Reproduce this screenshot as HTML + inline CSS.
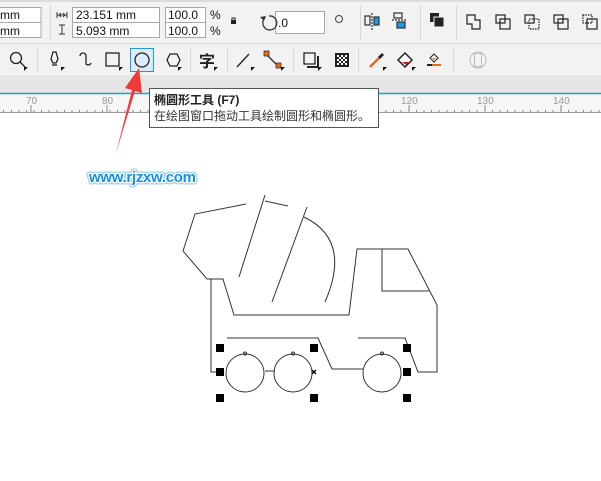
<!DOCTYPE html>
<html><head><meta charset="utf-8"><style>
html,body{margin:0;padding:0;width:601px;height:481px;overflow:hidden;background:#fff;font-family:"Liberation Sans","Noto Sans CJK SC",sans-serif}
svg{position:absolute;left:0;top:0}
</style></head><body>
<svg width="601" height="481" viewBox="0 0 601 481" xmlns="http://www.w3.org/2000/svg" font-family="Liberation Sans, Noto Sans CJK SC, sans-serif">
<rect x="0" y="0" width="601" height="43" fill="#f2f2f2"/>
<rect x="0" y="0" width="601" height="2" fill="#dcdcdc"/>
<line x1="0" y1="43.5" x2="601" y2="43.5" stroke="#dadada"/>
<g fill="#fff" stroke="#a8a8a8">
<rect x="-2" y="7.5" width="43" height="15"/><rect x="-2" y="22.5" width="43" height="15"/>
<rect x="72.5" y="7.5" width="87" height="15"/><rect x="72.5" y="22.5" width="87" height="15"/>
<rect x="165.5" y="7.5" width="40" height="15"/><rect x="165.5" y="22.5" width="40" height="15"/>
<rect x="275.5" y="11.5" width="49" height="22"/>
</g>
<g font-size="12" fill="#111">
<text x="0" y="19">mm</text><text x="0" y="35">mm</text>
<text x="76" y="19">23.151 mm</text><text x="76" y="35">5.093 mm</text>
<text x="168" y="19">100.0</text><text x="168" y="35">100.0</text>
<text x="210" y="19">%</text><text x="210" y="35">%</text>
<text x="278" y="27">.0</text>
</g>
<line x1="50.5" y1="5" x2="50.5" y2="40" stroke="#d8d8d8"/>
<g stroke="#333" fill="none">
<path d="M57 15h10M57 12v6M67 12v6M59 15l2-2M59 15l2 2M65 15l-2-2M65 15l-2 2"/>
<path d="M62 25v9M59 25h6M59 34h6"/>
</g>
<rect x="231" y="20" width="5" height="4" fill="#222"/><path d="M232 20v-2h3v2" stroke="#222" fill="none"/>
<path d="M269 16a7 7 0 1 1-5.5 4" stroke="#333" stroke-width="1.3" fill="none"/><path d="M260 17l4 4 2-5z" fill="#333"/>
<circle cx="339" cy="19" r="3.5" stroke="#444" fill="none"/>
<g stroke="#d8d8d8"><line x1="360.5" y1="5" x2="360.5" y2="40"/><line x1="420.5" y1="5" x2="420.5" y2="40"/><line x1="456.5" y1="5" x2="456.5" y2="40"/></g>
<g stroke="#333" fill="none" stroke-width="1.2">
<path d="M365 16h5v9h-5z"/><path d="M372 13v17" stroke-dasharray="2 1"/>
<rect x="374" y="17" width="5" height="8" fill="#1a9de0"/>
<path d="M394 13h8v5h-8z"/><path d="M392 20h14" stroke-dasharray="2 1"/>
<rect x="397" y="22" width="8" height="6" fill="#1a9de0"/>
</g>
<rect x="430" y="13" width="9" height="9" fill="#222"/><rect x="434" y="17" width="10" height="10" fill="#222" stroke="#f2f2f2"/>
<g stroke="#222" fill="none" stroke-width="1.2">
<path d="M467 15h8v5h5v9h-8v-5h-5z"/>
<rect x="496" y="15" width="9" height="8"/><rect x="500" y="19" width="10" height="10"/>
<rect x="525" y="15" width="9" height="8"/><rect x="529" y="19" width="10" height="10" stroke-dasharray="1.5 1"/>
<rect x="554" y="15" width="9" height="8"/><rect x="558" y="19" width="10" height="10"/>
<rect x="583" y="15" width="9" height="8" stroke-dasharray="1.5 1"/><rect x="587" y="19" width="10" height="10"/>
</g>
<rect x="0" y="44" width="601" height="31" fill="#f2f2f2"/>
<g stroke="#d8d8d8"><line x1="37.5" y1="48" x2="37.5" y2="72"/><line x1="190.5" y1="48" x2="190.5" y2="72"/><line x1="227.5" y1="48" x2="227.5" y2="72"/><line x1="293.5" y1="48" x2="293.5" y2="72"/><line x1="358.5" y1="48" x2="358.5" y2="72"/><line x1="453.5" y1="48" x2="453.5" y2="72"/></g>
<g fill="#111">
<path d="M24 67l4 0-4 4z"/><path d="M61 67l4 0-4 4z"/><path d="M119 67l4 0-4 4z"/><path d="M149 67l4 0-4 4z"/><path d="M178 67l4 0-4 4z"/><path d="M214 67l4 0-4 4z"/><path d="M251 67l4 0-4 4z"/><path d="M281 67l4 0-4 4z"/><path d="M318 67l4 0-4 4z"/><path d="M383 67l4 0-4 4z"/><path d="M412 67l4 0-4 4z"/>
</g>
<g stroke="#222" fill="none" stroke-width="1.3">
<circle cx="16" cy="58" r="5.5"/><path d="M20 62l5 5"/>
<path d="M53 52l3 0 2 7-2 4h-3l-2-4z"/><path d="M52 65h5"/>
<path d="M80 56a3 3 0 0 1 6 0v8a3 3 0 0 0 5-1"/>
<rect x="106" y="53" width="13" height="13"/>
<path d="M167 60l3-6h7l3 6-3 6h-7z"/>
<path d="M237 67l12-13"/>
<path d="M266 54l12 12" stroke="#333"/>
<path d="M304 53h11v11h-11z"/><path d="M307 67h11v-11" stroke-width="2"/>
</g>
<rect x="130.5" y="48.5" width="23" height="23" fill="#dcecfb" stroke="#1e9ae0"/>
<circle cx="142" cy="60" r="7" stroke="#222" stroke-width="1.3" fill="none"/>
<text x="199" y="67" font-size="16" font-weight="bold" fill="#222">字</text>
<rect x="264" y="51" width="5" height="5" fill="#ee6a12" stroke="#222" stroke-width=".7"/><rect x="276" y="63" width="5" height="5" fill="#ee6a12" stroke="#222" stroke-width=".7"/>
<rect x="335" y="53" width="14" height="14" fill="#222"/>
<g fill="#fff"><rect x="337" y="55" width="2" height="2"/><rect x="341" y="55" width="2" height="2"/><rect x="345" y="55" width="2" height="2"/><rect x="339" y="57" width="2" height="2"/><rect x="343" y="57" width="2" height="2"/><rect x="337" y="59" width="2" height="2"/><rect x="341" y="59" width="2" height="2"/><rect x="345" y="59" width="2" height="2"/><rect x="339" y="61" width="2" height="2"/><rect x="343" y="61" width="2" height="2"/><rect x="337" y="63" width="2" height="2"/><rect x="341" y="63" width="2" height="2"/><rect x="345" y="63" width="2" height="2"/></g>
<path d="M370 67l9-9" stroke="#e06a20" stroke-width="2.5"/><path d="M378 57l4-4 2 2-4 4z" fill="#222"/>
<path d="M398 60l7-7 7 7-7 7z" stroke="#222" stroke-width="1.5" fill="#fff"/><path d="M402 62h7l-3 3z" fill="#e01010"/>
<path d="M427 65h14" stroke="#222" stroke-width="2"/><path d="M432 65h9" stroke="#ee6a12" stroke-width="2"/><path d="M430 58l4-4 4 4-4 4z" stroke="#222" fill="#fff"/><path d="M432 58h4l-2 2z" fill="#ee6a12"/>
<circle cx="478" cy="60" r="8" stroke="#bbb" fill="none"/><rect x="474.5" y="53.5" width="7" height="13" stroke="#bbb" fill="none"/>
<rect x="0" y="75" width="601" height="18" fill="#e6e6e6"/>
<rect x="0" y="93" width="601" height="20" fill="#f6f6f6"/>
<line x1="0" y1="93.5" x2="601" y2="93.5" stroke="#1e9ae0" stroke-width="1.5"/>
<line x1="0" y1="112.5" x2="601" y2="112.5" stroke="#9a9a9a"/>
<g stroke="#888">
<path d="M3.5 110v2M11.5 110v2M19 110v2M26.5 110v2M34 110v2M41.5 110v2M49 110v2M57 110v2M64.5 110v2M72 110v2M79.5 110v2M87 110v2M95 110v2M102.5 110v2M110 110v2M117.5 110v2M125 110v2M133 110v2M140.5 110v2M148 110v2M386 110v2M393.5 110v2M401 110v2M409 110v2M416.5 110v2M424 110v2M431.5 110v2M439 110v2M447 110v2M454.5 110v2M462 110v2M469.5 110v2M477 110v2M485 110v2M492.5 110v2M500 110v2M507.5 110v2M515 110v2M523 110v2M530.5 110v2M538 110v2M545.5 110v2M553 110v2M561 110v2M568.5 110v2M576 110v2M583.5 110v2M591 110v2M599 110v2"/>
<path d="M31 105v7M107 105v7M409 105v7M485 105v7M561 105v7"/>
</g>
<g font-size="10" fill="#999"><text x="26" y="104">70</text><text x="102" y="104">80</text><text x="401" y="104">120</text><text x="477" y="104">130</text><text x="553" y="104">140</text></g>
<rect x="149.5" y="88.5" width="229" height="39" fill="#fff" stroke="#555"/>
<text x="154" y="104" font-size="12" font-weight="bold" fill="#222">椭圆形工具 (F7)</text>
<text x="154" y="120" font-size="12" fill="#333">在绘图窗口拖动工具绘制圆形和椭圆形。</text>
<path d="M116 153L132 90L125 88L139 68L142 93L135 91Z" fill="#f03a3a"/>
<text x="89" y="182" font-size="15" font-weight="bold" fill="#1a8ee0" stroke="#5ab4f0" stroke-width="5" stroke-linejoin="round" letter-spacing="-0.3" opacity="0.6">www.rjzxw.com</text>
<text x="89" y="182" font-size="15" font-weight="bold" fill="#1a8ee0" stroke="#fff" stroke-width="2.5" stroke-linejoin="round" paint-order="stroke" letter-spacing="-0.3">www.rjzxw.com</text>
<g fill="none" stroke="#333" stroke-width="1">
<path d="M246 204L195 214L183 251L207 279H223L234 315H349L357 249H408L437 305V372H418L405 338H358"/>
<path d="M211 279V372H220"/>
<path d="M382 249V291H429"/>
<path d="M265 195L239 277"/><path d="M265 201L288 206"/><path d="M307 207L272 302"/>
<path d="M304 217Q352 240 325 302"/>
<path d="M227 338H318L332 369H363"/>
<path d="M265 371H275"/>
<circle cx="245" cy="373" r="19"/><circle cx="293" cy="373" r="19"/><circle cx="382" cy="373" r="19"/>
<circle cx="245" cy="353.5" r="1.5"/><circle cx="293" cy="353.5" r="1.5"/><circle cx="382" cy="353.5" r="1.5"/>
</g>
<g fill="#000">
<rect x="216" y="344" width="8" height="8"/><rect x="310" y="344" width="8" height="8"/><rect x="403" y="344" width="8" height="8"/>
<rect x="216" y="368" width="8" height="8"/><rect x="403" y="368" width="8" height="8"/>
<rect x="216" y="394" width="8" height="8"/><rect x="310" y="394" width="8" height="8"/><rect x="403" y="394" width="8" height="8"/>
</g>
<path d="M312 370l4 4M316 370l-4 4" stroke="#000" stroke-width="1.3"/>
</svg>
</body></html>
